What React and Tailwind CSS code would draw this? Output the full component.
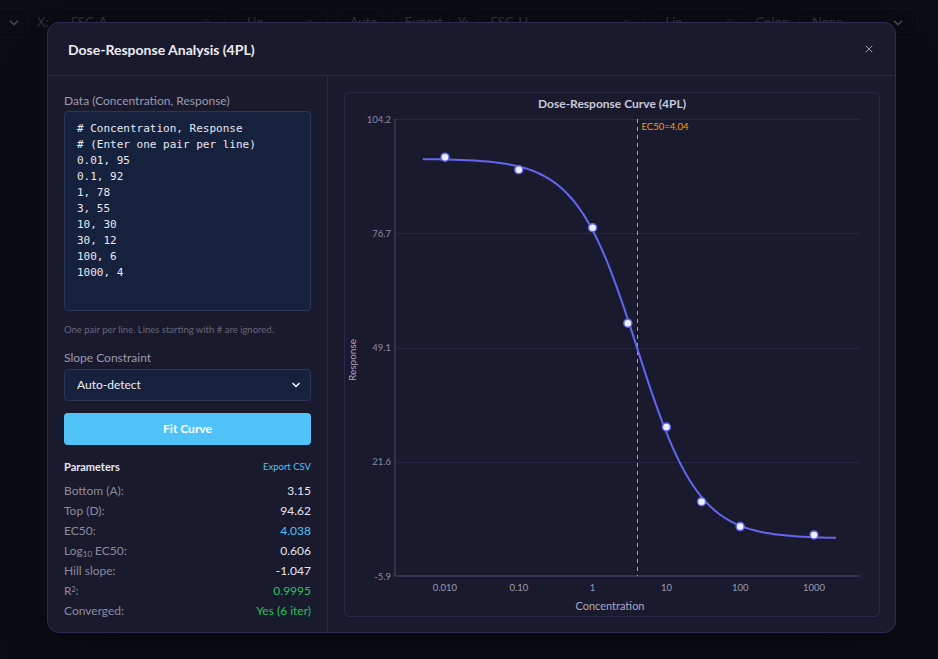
import { ChevronDown, ChevronsUpDown, X } from 'lucide-react'

const DATA = [
  [0.01, 95], [0.1, 92], [1, 78], [3, 55], [10, 30], [30, 12], [100, 6], [1000, 4],
]
const FIT = { bottom: 3.15, top: 94.62, ec50: 4.038, hill: 1.047 }

const TEXT = `# Concentration, Response
# (Enter one pair per line)
0.01, 95
0.1, 92
1, 78
3, 55
10, 30
30, 12
100, 6
1000, 4`

function ToolbarBox({ w, label, icon = 'updown' }) {
  return (
    <div className={`flex h-[30px] items-center justify-between rounded border border-[#1e2233] px-3 text-[13px] text-[#5c6272] ${w}`}>
      <span>{label}</span>
      {icon === 'updown' ? <ChevronsUpDown size={10} /> : icon === 'down' ? <ChevronDown size={14} strokeWidth={3} /> : null}
    </div>
  )
}

function BackgroundApp() {
  return (
    <div className="h-full w-full bg-[#141828]">
      <div className="flex h-[46px] items-center gap-[9px] border-b border-[#1c2030]">
        <div className="flex h-[30px] w-[28px] items-center justify-center rounded-r border border-l-0 border-[#1e2233] text-[#8a90a0]">
          <ChevronDown size={14} strokeWidth={3} />
        </div>
        <span className="text-[13px] text-[#5c6272]">X:</span>
        <ToolbarBox w="w-[167px]" label="FSC-A" />
        <ToolbarBox w="w-[94px]" label="Lin" />
        <ToolbarBox w="w-[46px]" label="Auto" icon={null} />
        <ToolbarBox w="w-[57px]" label="Export" icon={null} />
        <span className="text-[13px] text-[#5c6272]">Y:</span>
        <ToolbarBox w="w-[166px]" label="FSC-H" />
        <ToolbarBox w="w-[94px]" label="Lin" />
        <span className="text-[13px] text-[#5c6272]">Color:</span>
        <div className="flex h-[30px] w-[119px] items-center justify-between rounded border border-[#1e2233] px-3 text-[13px] text-[#5c6272]">
          <span>None</span>
          <ChevronDown size={14} strokeWidth={3} className="text-[#8a90a0]" />
        </div>
      </div>
    </div>
  )
}

function Chart() {
  const ox = 345
  const oy = 93
  const L = 395, R = 860, T = 119, B = 576
  const X = (c) => 445 + (Math.log10(c) + 2) * 73.8 - ox
  const Y = (v) => T + (104.2 - v) * ((B - T) / 110.1) - oy
  const f = (c) => FIT.bottom + (FIT.top - FIT.bottom) / (1 + Math.pow(c / FIT.ec50, FIT.hill))
  const pts = []
  for (let i = 0; i <= 160; i++) {
    const lg = -2.3 + (5.6 * i) / 160
    const c = Math.pow(10, lg)
    pts.push(`${X(c).toFixed(2)},${Y(f(c)).toFixed(2)}`)
  }
  const yTicks = [104.2, 76.7, 49.1, 21.6, -5.9]
  const xTicks = [[0.01, '0.010'], [0.1, '0.10'], [1, '1'], [10, '10'], [100, '100'], [1000, '1000']]
  // snap to a pixel centre so the dashed line stays crisp
  const ecx = Math.floor(X(FIT.ec50)) + 0.5
  return (
    <svg width="534" height="523" className="block" style={{ fontFamily: 'Lato, sans-serif' }}>
      <text x={612 - ox} y={108 - oy} textAnchor="middle" fontSize="12" fontWeight="700" fill="#c8c8d8">
        Dose-Response Curve (4PL)
      </text>
      {yTicks.map((v) => (
        <g key={v}>
          {v !== -5.9 && <line x1={L - ox} x2={R - ox} y1={Math.round(Y(v)) + 0.5} y2={Math.round(Y(v)) + 0.5} stroke="#262642" strokeWidth="1" />}
          <text x={391 - ox} y={Y(v) + 3.5} textAnchor="end" fontSize="9.5" fill="#8a8aa2">{v}</text>
        </g>
      ))}
      <line x1={L - ox} x2={L - ox} y1={T - oy} y2={B - oy} stroke="#3c3c5e" strokeWidth="1.5" />
      <line x1={L - ox} x2={R - ox} y1={B - oy} y2={B - oy} stroke="#3c3c5e" strokeWidth="1.5" />
      {xTicks.map(([c, s]) => (
        <text key={s} x={X(c)} y={591 - oy} textAnchor="middle" fontSize="9.5" fill="#9a9ab2">{s}</text>
      ))}
      <text x={610 - ox} y={610 - oy} textAnchor="middle" fontSize="11" fill="#a8a8c0">Concentration</text>
      <text transform={`translate(${356 - ox},${360 - oy}) rotate(-90)`} textAnchor="middle" fontSize="10" fill="#a8a8c0">Response</text>
      <line x1={ecx} x2={ecx} y1={T - oy} y2={B - oy} stroke="#f59e0b" strokeWidth="1" strokeDasharray="4 4" />
      <text x={ecx + 4} y={130 - oy} fontSize="9.5" fill="#f59e0b">EC50=4.04</text>
      <polyline points={pts.join(' ')} fill="none" stroke="#6366f1" strokeWidth="2" />
      {DATA.map(([c, v]) => (
        <circle key={c} cx={X(c)} cy={Y(v)} r="4" fill="#eef0ff" stroke="#6366f1" strokeWidth="1.5" />
      ))}
    </svg>
  )
}

function Row({ label, value, tone = 'text-[#e6e6ee]' }) {
  return (
    <div className="flex h-5 items-center justify-between text-[12px]">
      <span className="text-[#8a8a9c]">{label}</span>
      <span className={tone}>{value}</span>
    </div>
  )
}

export default function App() {
  return (
    <div className="relative h-[659px] w-[938px] overflow-hidden" style={{ fontFamily: 'Lato, "Noto Sans", sans-serif' }}>
      <BackgroundApp />
      <div className="absolute inset-0 bg-black/50 pl-[47px] pt-[22px]">
        <div className="flex h-[611px] w-[849px] flex-col rounded-xl border border-[#2c2c50] bg-[#1a1a2e] shadow-2xl">
          <div className="flex h-[53px] items-center justify-between border-b border-[#2a2a48] pl-5 pr-5">
            <h2 className="pt-[1px] text-[14px] font-bold text-[#ececf4]">Dose-Response Analysis (4PL)</h2>
            <X size={12} className="text-[#9a9ab0]" />
          </div>
          <div className="flex min-h-0 flex-1">
            <div className="w-[280px] shrink-0 border-r border-[#2a2a48] px-4 pt-[17px]">
              <label className="block h-4 text-[12px] leading-4 text-[#9a9aae]">Data (Concentration, Response)</label>
              <textarea
                readOnly
                value={TEXT}
                spellCheck={false}
                className="mt-[2px] block h-[200px] w-full resize-none rounded border border-[#2a3558] bg-[#16213e] px-3 pt-[9px] text-[11px] leading-4 text-[#e8e8f0] outline-none"
                style={{ fontFamily: '"DejaVu Sans Mono", monospace' }}
              />
              <p className="mt-[12px] text-[9.5px] leading-[14px] text-[#666678]">One pair per line. Lines starting with # are ignored.</p>
              <label className="mt-[13px] block h-4 text-[12px] leading-4 text-[#9a9aae]">Slope Constraint</label>
              <div className="relative mt-[3px]">
                <select className="block h-[32px] w-full appearance-none rounded border border-[#2a3558] bg-[#16213e] px-3 text-[12px] text-[#ececf4] outline-none">
                  <option>Auto-detect</option>
                </select>
                <ChevronDown size={12} strokeWidth={3.5} className="pointer-events-none absolute right-[9px] top-[10px] text-[#e6e6ee]" />
              </div>
              <button className="mt-[12px] block h-[32px] w-full rounded bg-[#4fc3f7] text-[12px] font-bold text-white">Fit Curve</button>
              <div className="mt-[14px] flex h-4 items-center justify-between">
                <span className="text-[11px] font-bold text-[#e6e6ee]">Parameters</span>
                <span className="text-[9.5px] text-[#4fc3f7]">Export CSV</span>
              </div>
              <div className="mt-[6px]">
                <Row label="Bottom (A):" value="3.15" />
                <Row label="Top (D):" value="94.62" />
                <Row label="EC50:" value="4.038" tone="text-[#4fc3f7]" />
                <Row label={<>Log<sub className="text-[8px]">10</sub> EC50:</>} value="0.606" />
                <Row label="Hill slope:" value="-1.047" />
                <Row label={<>R<sup className="text-[7px]">2</sup>:</>} value="0.9995" tone="text-[#22c55e]" />
                <Row label="Converged:" value="Yes (6 iter)" tone="text-[#22c55e]" />
              </div>
            </div>
            <div className="flex-1 p-4">
              <div className="h-[525px] rounded-md border border-[#2a2a48] bg-[#1a1a2e]">
                <Chart />
              </div>
            </div>
          </div>
        </div>
      </div>
    </div>
  )
}
